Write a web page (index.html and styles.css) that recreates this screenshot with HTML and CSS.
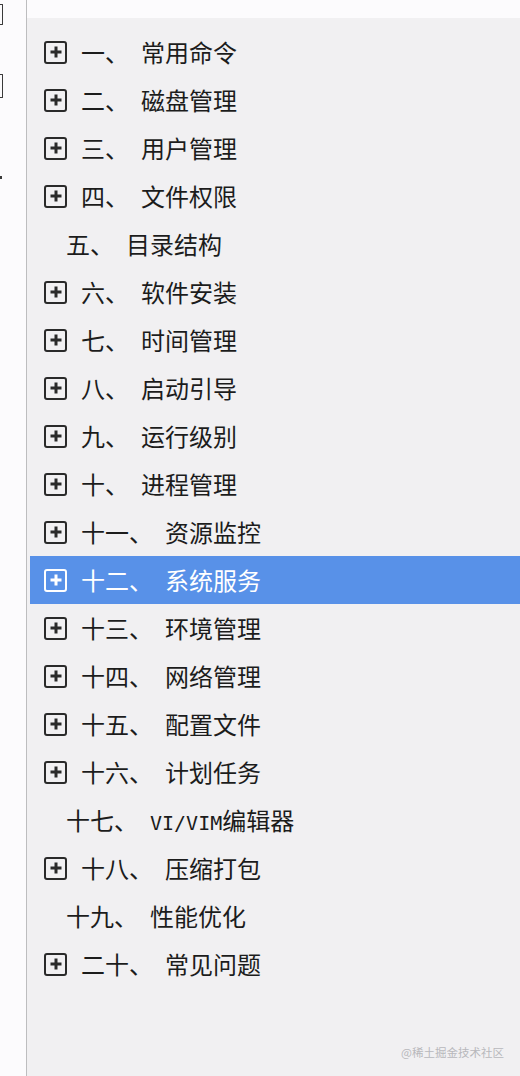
FILE: index.html
```html
<!DOCTYPE html>
<html lang="zh">
<head>
<meta charset="utf-8">
<link rel="stylesheet" href="styles.css">
</head>
<body>
<div class="page">
  <aside class="side">
    <span class="mark m1"></span>
    <span class="mark m2"></span>
    <span class="dot"></span>
  </aside>
  <main class="panel">
    <div class="topbar"></div>
    <ul class="tree">
      <li class="row"><span class="plus"></span><span class="num">一、</span><span class="title">常用命令</span></li>
      <li class="row"><span class="plus"></span><span class="num">二、</span><span class="title">磁盘管理</span></li>
      <li class="row"><span class="plus"></span><span class="num">三、</span><span class="title">用户管理</span></li>
      <li class="row"><span class="plus"></span><span class="num">四、</span><span class="title">文件权限</span></li>
      <li class="row leaf"><span class="num">五、</span><span class="title">目录结构</span></li>
      <li class="row"><span class="plus"></span><span class="num">六、</span><span class="title">软件安装</span></li>
      <li class="row"><span class="plus"></span><span class="num">七、</span><span class="title">时间管理</span></li>
      <li class="row"><span class="plus"></span><span class="num">八、</span><span class="title">启动引导</span></li>
      <li class="row"><span class="plus"></span><span class="num">九、</span><span class="title">运行级别</span></li>
      <li class="row"><span class="plus"></span><span class="num">十、</span><span class="title">进程管理</span></li>
      <li class="row"><span class="plus"></span><span class="num">十一、</span><span class="title">资源监控</span></li>
      <li class="row active"><span class="plus"></span><span class="num">十二、</span><span class="title">系统服务</span></li>
      <li class="row"><span class="plus"></span><span class="num">十三、</span><span class="title">环境管理</span></li>
      <li class="row"><span class="plus"></span><span class="num">十四、</span><span class="title">网络管理</span></li>
      <li class="row"><span class="plus"></span><span class="num">十五、</span><span class="title">配置文件</span></li>
      <li class="row"><span class="plus"></span><span class="num">十六、</span><span class="title">计划任务</span></li>
      <li class="row leaf"><span class="num">十七、</span><span class="title"><span class="latin">VI/VIM</span>编辑器</span></li>
      <li class="row"><span class="plus"></span><span class="num">十八、</span><span class="title">压缩打包</span></li>
      <li class="row leaf"><span class="num">十九、</span><span class="title">性能优化</span></li>
      <li class="row"><span class="plus"></span><span class="num">二十、</span><span class="title">常见问题</span></li>
    </ul>
    <div class="watermark">@稀土掘金技术社区</div>
  </main>
</div>
</body>
</html>
```
FILE: styles.css
```css
* { box-sizing: border-box; }
html, body { margin: 0; padding: 0; }
body {
  width: 520px;
  height: 1076px;
  overflow: hidden;
  background: #fcfbfd;
  font-family: "Noto Sans CJK SC", "Noto Sans", sans-serif;
  color: #1c1c1c;
}
.page {
  display: flex;
  height: 1076px;
}
.side {
  width: 27px;
  flex: none;
  background: #fcfbfd;
  border-right: 1px solid #bdbdbf;
  position: relative;
}
.mark {
  position: absolute;
  left: 0;
  width: 3px;
  border: 1.5px solid #3a3a3a;
  border-left: none;
  border-radius: 0 1px 1px 0;
}
.m1 { top: 4px; height: 21px; }
.m2 { top: 74px; height: 24px; }
.dot {
  position: absolute;
  left: 0;
  top: 176px;
  width: 2px;
  height: 3px;
  background: #3a3a3a;
}
.panel {
  flex: 1;
  display: flex;
  flex-direction: column;
  background: #f1f0f2;
  position: relative;
}
.topbar {
  height: 18px;
  background: #fcfbfd;
  flex: none;
}
.tree {
  list-style: none;
  margin: 0;
  padding: 10px 0 0 3px;
}
.row {
  height: 48px;
  display: flex;
  align-items: center;
  padding-left: 14px;
  font-size: 24px;
  line-height: 1;
}
.row.leaf { padding-left: 36px; }
.plus {
  width: 23px;
  height: 23px;
  border: 2px solid #2a2a2a;
  border-radius: 3px;
  margin-right: 14px;
  position: relative;
  flex: none;
}
.plus::before, .plus::after {
  content: "";
  position: absolute;
  background: #2a2a2a;
  left: 50%;
  top: 50%;
  transform: translate(-50%, -50%);
}
.plus::before { width: 11px; height: 3px; }
.plus::after { width: 3px; height: 11px; }
.num { margin-right: 12px; }
.latin {
  font-family: "DejaVu Sans Mono", "Liberation Mono", monospace;
  font-size: 20px;
  letter-spacing: 0;
}
.row.active {
  background: #5891e8;
  color: #ffffff;
}
.row.active .plus { border-color: #ffffff; }
.row.active .plus::before, .row.active .plus::after { background: #ffffff; }
.watermark {
  position: absolute;
  right: 16px;
  bottom: 16px;
  font-size: 11.5px;
  color: #b8b8bc;
}
```
